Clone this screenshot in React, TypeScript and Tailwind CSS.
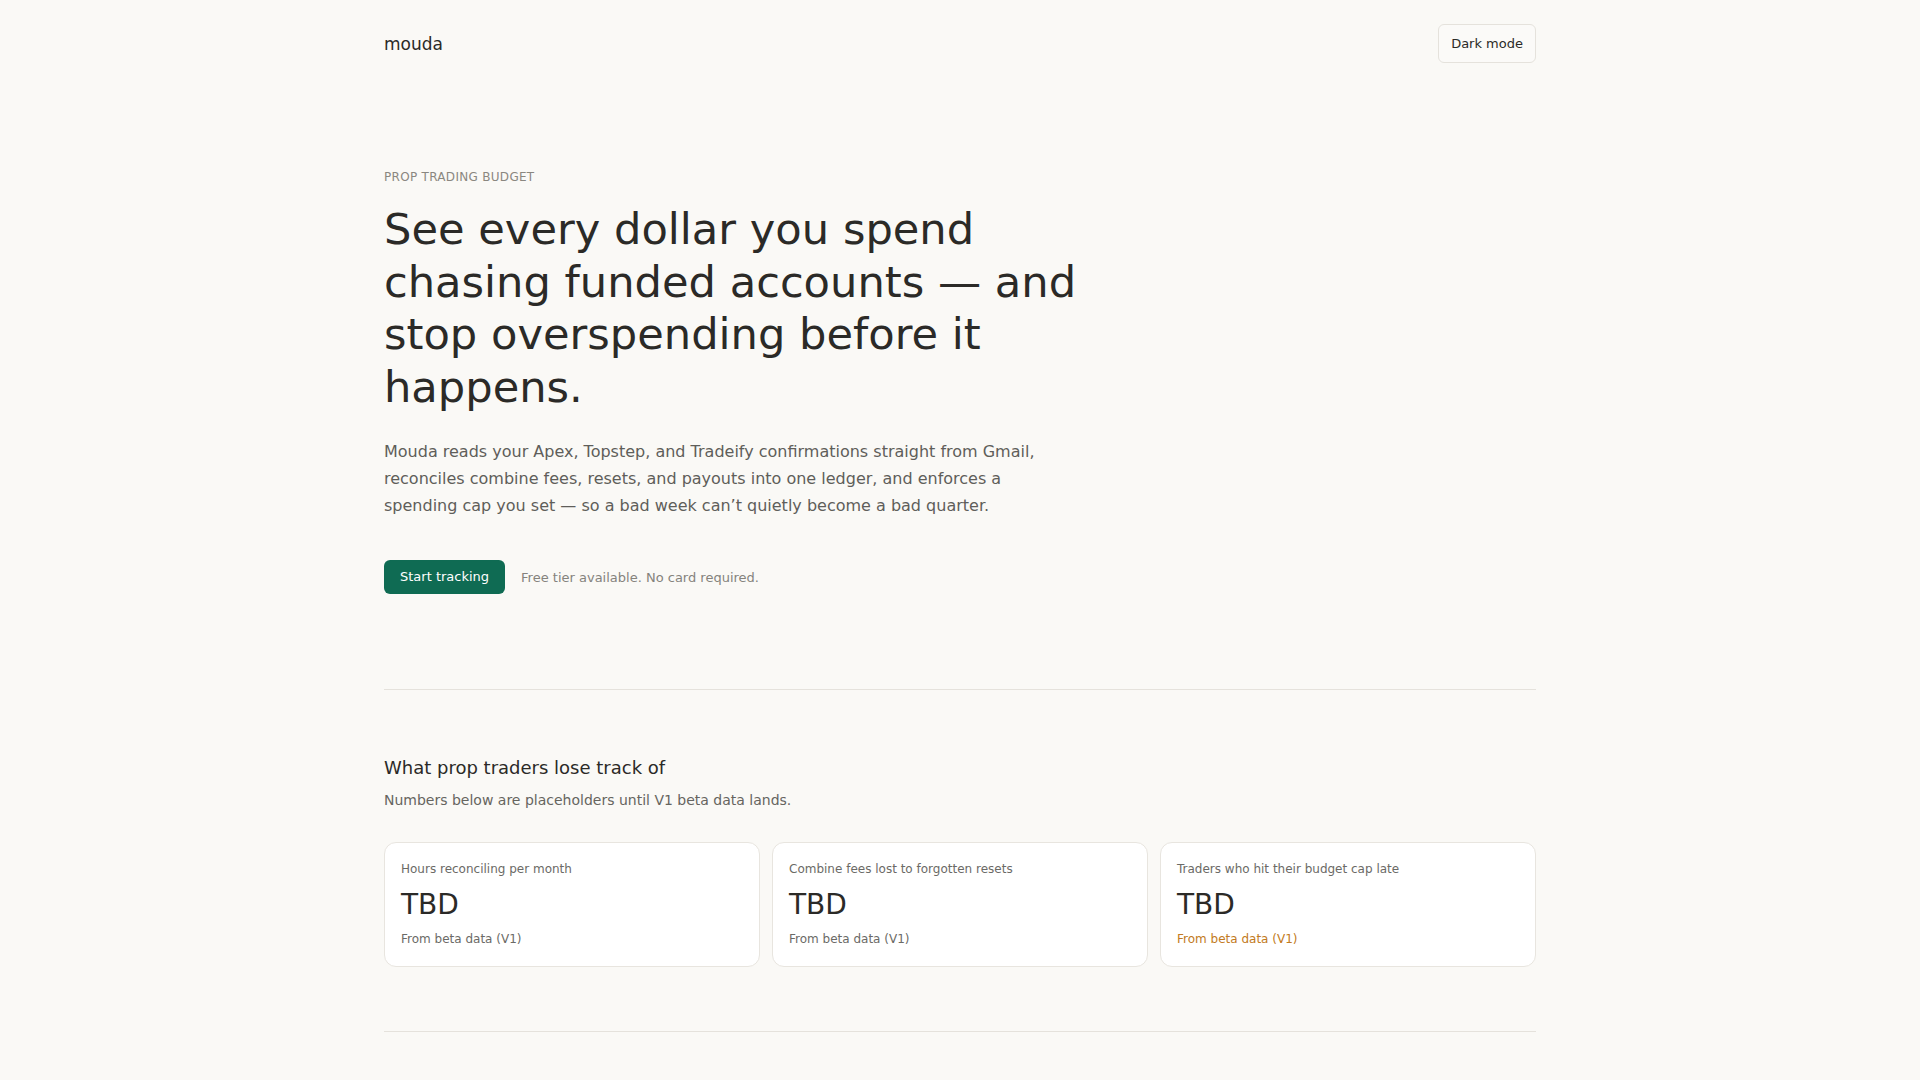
import React from "react";

type Stat = {
  label: string;
  value: string;
  note: string;
  warn?: boolean;
};

const stats: Stat[] = [
  { label: "Hours reconciling per month", value: "TBD", note: "From beta data (V1)" },
  { label: "Combine fees lost to forgotten resets", value: "TBD", note: "From beta data (V1)" },
  { label: "Traders who hit their budget cap late", value: "TBD", note: "From beta data (V1)", warn: true },
];

const StatCard: React.FC<{ stat: Stat }> = ({ stat }) => (
  <div className="rounded-xl border border-[#e8e5df] bg-white px-4 pt-[18px] pb-[19px]">
    <p className="text-xs leading-4 text-[#6b6a66]">{stat.label}</p>
    <p className="mt-2.5 text-[28px] leading-9 text-[#2b2a27]">{stat.value}</p>
    <p className={`mt-2 text-xs leading-4 ${stat.warn ? "text-[#c27a22]" : "text-[#6b6a66]"}`}>{stat.note}</p>
  </div>
);

const App: React.FC = () => {
  return (
    <div className="min-h-screen bg-[#faf9f6] font-['DejaVu_Sans',sans-serif] text-[#2b2a27]">
      <div className="mx-auto max-w-6xl">
        <header className="flex items-center justify-between py-6">
          <span className="pt-0.5 text-[17px]">mouda</span>
          <button className="rounded-md border border-[#e5e2dc] bg-[#fbfaf8] px-3 py-[10px] text-[13px] leading-[17px] text-[#2b2a27]">
            Dark mode
          </button>
        </header>

        <section className="pt-20 pb-[95px]">
          <p className="mb-4 text-xs leading-5 tracking-wide text-[#8a8780]">PROP TRADING BUDGET</p>
          <h1 className="max-w-[720px] text-[2.7rem] leading-[1.22] font-normal">
            See every dollar you spend chasing funded accounts — and stop overspending before it happens.
          </h1>
          <p className="mt-6 max-w-2xl text-base leading-[1.7] text-[#5f5e5a]">
            Mouda reads your Apex, Topstep, and Tradeify confirmations straight from Gmail, reconciles combine fees,
            resets, and payouts into one ledger, and enforces a spending cap you set — so a bad week can’t quietly
            become a bad quarter.
          </p>
          <div className="mt-[41px] flex items-center gap-4">
            <button className="rounded-md bg-[#0f6b53] px-4 py-2 text-[13px] leading-[18px] text-white">
              Start tracking
            </button>
            <span className="text-[13px] text-[#85837d]">Free tier available. No card required.</span>
          </div>
        </section>

        <section className="border-t border-[#e5e2dc] pt-16 pb-16">
          <h2 className="text-lg leading-7">What prop traders lose track of</h2>
          <p className="mt-2 text-sm leading-5 text-[#66655f]">
            Numbers below are placeholders until V1 beta data lands.
          </p>
          <div className="mt-8 grid grid-cols-3 gap-3">
            {stats.map((s) => (
              <StatCard key={s.label} stat={s} />
            ))}
          </div>
        </section>

        <div className="border-t border-[#e5e2dc] h-20" />
      </div>
    </div>
  );
};

export default App;
